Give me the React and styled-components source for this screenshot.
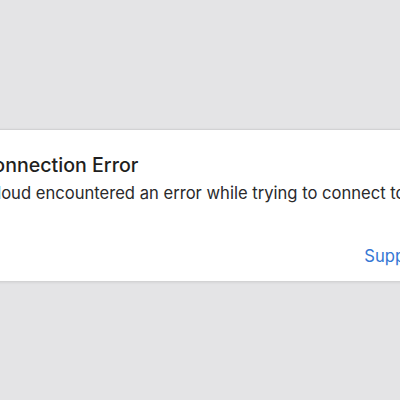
import React from 'react';
import styled, { createGlobalStyle } from 'styled-components';

const GlobalStyle = createGlobalStyle`
  html, body {
    margin: 0;
    padding: 0;
    background: #e4e4e6;
    overflow: hidden;
  }
  body {
    font-family: Inter, "Liberation Sans", sans-serif;
    -webkit-font-smoothing: antialiased;
  }
`;

const Page = styled.div`
  width: 400px;
  height: 400px;
  padding-top: 129px;
  box-sizing: border-box;
  overflow: hidden;
`;

const Card = styled.div`
  margin: 0 -60px 0 -40px;
  height: 152px;
  box-sizing: border-box;
  background: #ffffff;
  border-top: 1px solid #d2d2d4;
  box-shadow: 0 1px 3px rgba(0, 0, 0, 0.12);
  padding: 22px 33px 0 19px;
  display: flex;
  flex-direction: column;
`;

const Title = styled.h2`
  margin: 0;
  font-size: 19.6px;
  line-height: 26px;
  font-weight: 500;
  color: #1f1f21;
  white-space: nowrap;
`;

const Message = styled.p`
  margin: 4px 0 0 2px;
  font-size: 16.6px;
  line-height: 22px;
  font-weight: 400;
  color: #2a2a2c;
  white-space: nowrap;
`;

const Actions = styled.div`
  display: flex;
  justify-content: flex-end;
  margin-top: 41px;
`;

const LinkButton = styled.a`
  font-size: 16.6px;
  line-height: 22px;
  color: #3577d4;
  text-decoration: none;
  cursor: pointer;
`;

export default function App() {
  return (
    <>
      <GlobalStyle />
      <Page>
        <Card>
          <Title>Connection Error</Title>
          <Message>iCloud encountered an error while trying to connect to the server.</Message>
          <Actions>
            <LinkButton>Support</LinkButton>
          </Actions>
        </Card>
      </Page>
    </>
  );
}
